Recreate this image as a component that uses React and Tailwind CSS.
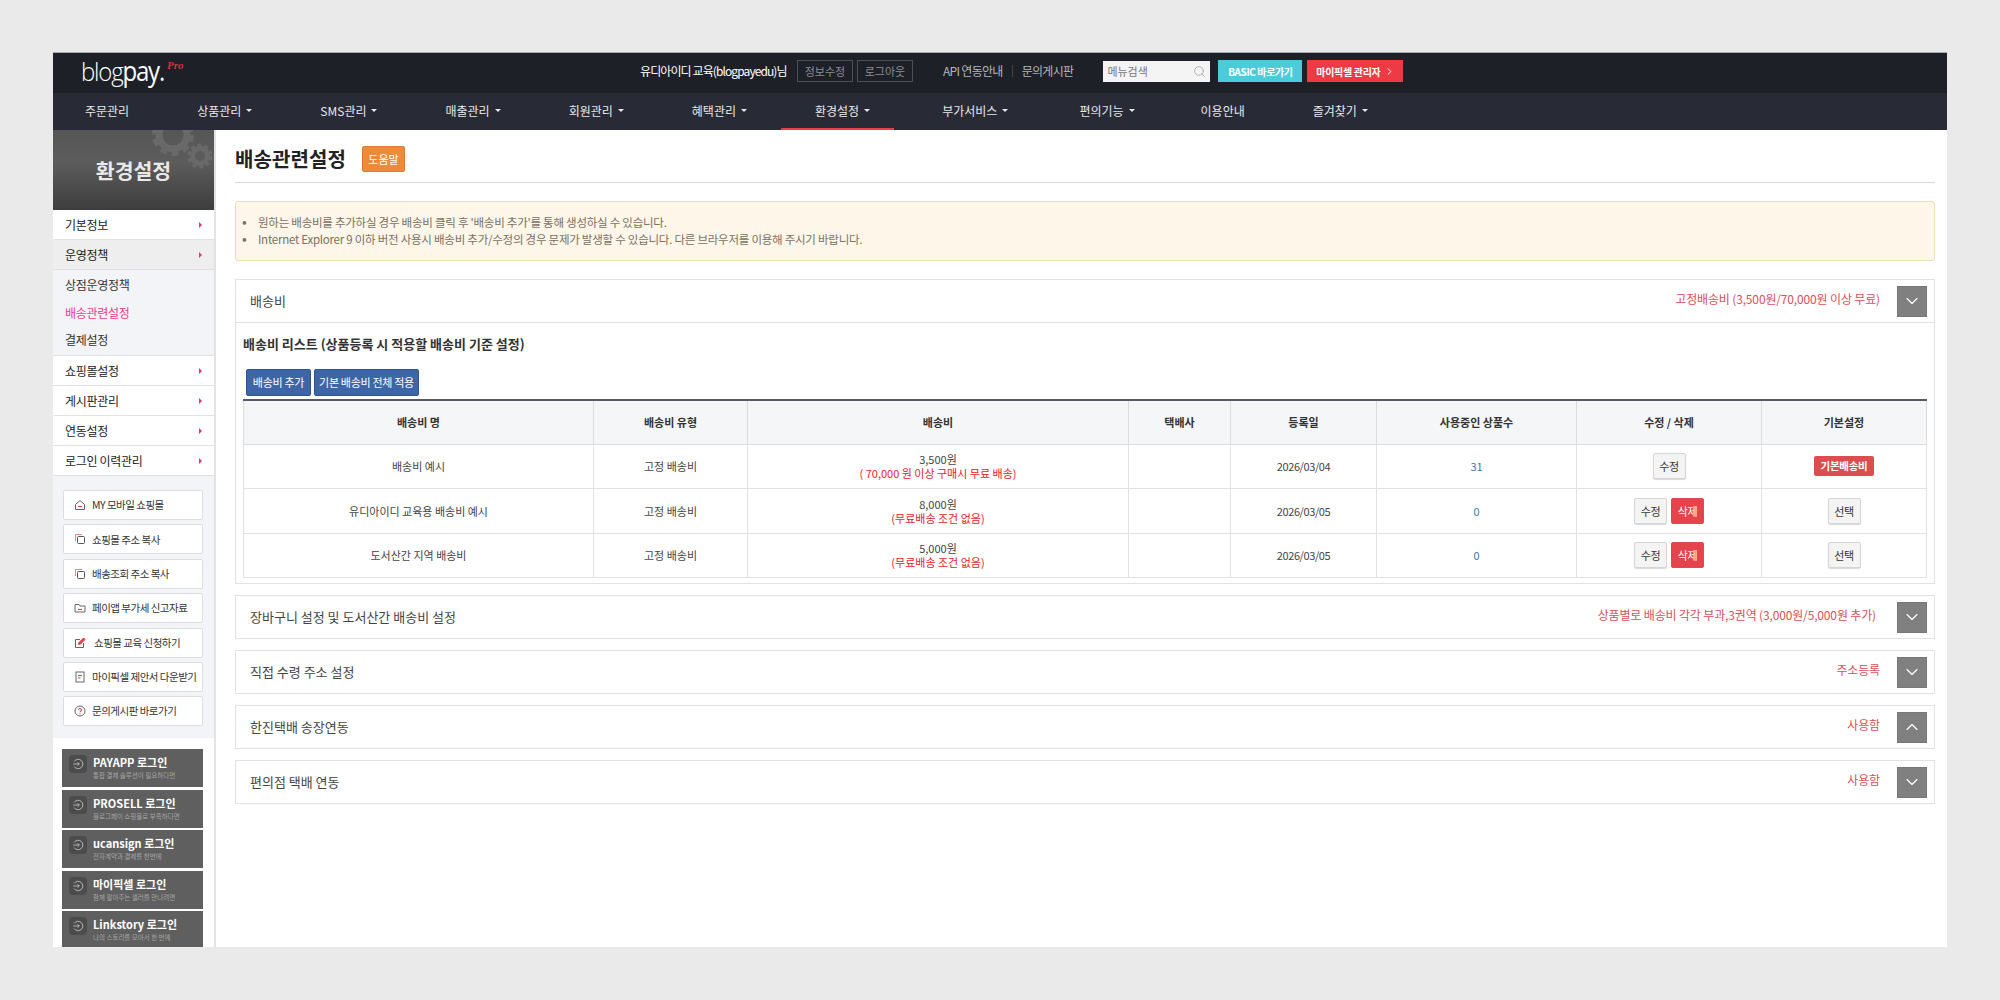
import React from "react";
import { ChevronDown, ChevronUp, ChevronRight, Search } from "lucide-react";

const FONT = "font-['Noto_Sans_CJK_KR','Noto_Sans',sans-serif]";

const NAV = [
  { label: "주문관리" },
  { label: "상품관리", caret: true },
  { label: "SMS관리", caret: true },
  { label: "매출관리", caret: true },
  { label: "회원관리", caret: true },
  { label: "혜택관리", caret: true },
  { label: "환경설정", caret: true, active: true },
  { label: "부가서비스", caret: true, wide: true },
  { label: "편의기능", caret: true, tight: true },
  { label: "이용안내" },
  { label: "즐겨찾기", caret: true },
];

function HomeIcon() {
  return (
    <svg width="12" height="12" viewBox="0 0 12 12" fill="none" stroke="#666" strokeWidth="1">
      <path d="M1.5 5.5 6 1.5l4.5 4v5h-9z" />
      <path d="M4 7.5h4" stroke="#d2404a" />
    </svg>
  );
}

function CopyIcon() {
  return (
    <svg width="12" height="12" viewBox="0 0 12 12" fill="none" strokeWidth="1">
      <path d="M1.5 8V1.5H8" stroke="#e08a90" />
      <rect x="3.5" y="3.5" width="7" height="7" rx="1" stroke="#555" />
    </svg>
  );
}

function FolderIcon() {
  return (
    <svg width="12" height="12" viewBox="0 0 12 12" fill="none" stroke="#666" strokeWidth="1">
      <path d="M1 2.5h4l1 1.5h5v6H1z" />
      <path d="M4 7.5h4" stroke="#d2404a" />
    </svg>
  );
}

function PenIcon() {
  return (
    <svg width="12" height="12" viewBox="0 0 12 12" fill="none" strokeWidth="1">
      <path d="M6 2.5H1.5v8h8V6" stroke="#666" />
      <path d="M4.5 7.5l.5-2 4.5-4.5 1.5 1.5L6.500 7z" fill="#e0404c" stroke="#e0404c" />
    </svg>
  );
}

function DocIcon() {
  return (
    <svg width="12" height="12" viewBox="0 0 12 12" fill="none" strokeWidth="1">
      <rect x="2" y="1" width="8" height="10" stroke="#666" />
      <path d="M4 4.500h4M4 7h2.500" stroke="#d2404a" />
    </svg>
  );
}

function HelpIcon() {
  return (
    <svg width="12" height="12" viewBox="0 0 12 12" fill="none" strokeWidth="1">
      <circle cx="6" cy="6" r="5" stroke="#666" />
      <path d="M4.500 4.800A1.500 1.500 0 1 1 6 6.500v.8M6 8.300v1" stroke="#c0303a" />
    </svg>
  );
}

const SIDE_LINKS = [
  { label: "MY 모바일 쇼핑몰", icon: HomeIcon },
  { label: "쇼핑몰 주소 복사", icon: CopyIcon },
  { label: "배송조회 주소 복사", icon: CopyIcon },
  { label: "페이앱 부가세 신고자료", icon: FolderIcon },
  { label: "쇼핑몰 교육 신청하기", icon: PenIcon, wide: true },
  { label: "마이픽셀 제안서 다운받기", icon: DocIcon },
  { label: "문의게시판 바로가기", icon: HelpIcon },
];

const LOGINS = [
  { title: "PAYAPP 로그인", sub: "통합 결제 솔루션이 필요하다면" },
  { title: "PROSELL 로그인", sub: "블로그페이 쇼핑몰로 부족하다면" },
  { title: "ucansign 로그인", sub: "전자계약과 결제를 한번에" },
  { title: "마이픽셀 로그인", sub: "함께 팔아주는 셀러를 만나려면" },
  { title: "Linkstory 로그인", sub: "나의 스토리를 모아서 한 번에" },
];

const ROWS = [
  { name: "배송비 예시", price: "3,500원", note: "( 70,000 원 이상 구매시 무료 배송)", date: "2026/03/04", count: "31", del: false, isDefault: true },
  { name: "유디아이디 교육용 배송비 예시", price: "8,000원", note: "(무료배송 조건 없음)", date: "2026/03/05", count: "0", del: true },
  { name: "도서산간 지역 배송비", price: "5,000원", note: "(무료배송 조건 없음)", date: "2026/03/05", count: "0", del: true },
];

const PANELS = [
  { title: "장바구니 설정 및 도서산간 배송비 설정", note: "상품별로 배송비 각각 부과,3권역 (3,000원/5,000원 추가)", far: true },
  { title: "직접 수령 주소 설정", note: "주소등록" },
  { title: "한진택배 송장연동", note: "사용함", open: true },
  { title: "편의점 택배 연동", note: "사용함" },
];

function Caret() {
  return <span className="ml-[5px] inline-block border-x-[3px] border-t-[3px] border-x-transparent border-t-current align-middle" />;
}

function ToggleBtn({ open }) {
  const Icon = open ? ChevronUp : ChevronDown;
  return (
    <span className="flex h-[31px] w-[30px] items-center justify-center border border-[#777] bg-[#808080] text-white">
      <Icon size={20} strokeWidth={1.4} />
    </span>
  );
}

function Header() {
  return (
    <div className="flex h-[41px] shrink-0 items-center border-t border-[#aaa] bg-[#1e2027] pb-[4px] text-[12px] text-white">
      <div className="ml-[28px] flex w-[559px] items-baseline font-['Open_Sans',sans-serif] text-[24px] leading-none">
        <span className="scale-y-110 font-light tracking-[-1.2px]">blog</span>
        <span className="scale-y-110 font-normal tracking-[-1.2px]">pay.</span>
        <span className="ml-[3px] -translate-y-[11px] font-['Liberation_Serif',serif] text-[11px] font-bold italic text-[#d0343c]">Pro</span>
      </div>
      <span className="w-[157px] tracking-[-0.9px] whitespace-nowrap">유디아이디 교육(blogpayedu)님</span>
      <span className="flex h-[22px] w-[56px] items-center justify-center border border-[#4d4f55] text-[11px] text-[#8d8f95]">정보수정</span>
      <span className="ml-[4px] flex h-[22px] w-[56px] items-center justify-center border border-[#4d4f55] text-[11px] text-[#8d8f95]">로그아웃</span>
      <span className="ml-[30px] text-[#b5b6ba] tracking-[-0.7px] whitespace-nowrap">API 연동안내</span>
      <span className="mx-[9px] h-[12px] w-px bg-[#444]" />
      <span className="text-[#b5b6ba] tracking-[-0.7px] whitespace-nowrap">문의게시판</span>
      <div className="ml-[30px] flex h-[21px] w-[107px] items-center justify-between bg-[#f4f4f4] pl-[4px] pr-[4px] text-[11px] text-[#777]">
        <span>메뉴검색</span>
        <Search size={13} strokeWidth={1.3} className="text-[#999]" />
      </div>
      <span className="ml-[8px] flex h-[22px] w-[84px] items-center justify-center bg-[#4ccbdb] text-[10px] font-bold tracking-[-0.4px] whitespace-nowrap">BASIC 바로가기</span>
      <span className="ml-[5px] flex h-[22px] w-[96px] items-center justify-center bg-[#ee3a45] text-[10px] font-bold tracking-[-0.3px] whitespace-nowrap">
        마이픽셀 관리자
        <ChevronRight size={11} className="ml-[3px]" />
      </span>
    </div>
  );
}

function navMargin(n) {
  if (n.active) return "mr-[14px]";
  if (n.wide) return "mr-[15px]";
  if (n.tight) return "mr-[10px]";
  return "mr-[12px]";
}

function Nav() {
  return (
    <div className="flex h-[37px] shrink-0 bg-[#282b35] text-[12px] text-[#e8e8ea]">
      {NAV.map((n, i) => (
        <div
          key={n.label}
          className={`flex items-center whitespace-nowrap border-b-[2px] pl-[34px] ${n.active ? "border-[#e5404d] pr-[24px]" : "border-transparent pr-[22px]"} ${navMargin(n)} ${i === 0 ? "ml-[-2px]" : ""}`}
        >
          {n.label}
          {n.caret && <Caret />}
        </div>
      ))}
    </div>
  );
}

function SideRow({ label, gray }) {
  return (
    <div
      className={`flex h-[30px] shrink-0 items-center justify-between border-b border-[#dfe1e4] px-[12px] text-[12px] tracking-[-0.3px] text-[#222] ${gray ? "bg-[#eeeeee]" : "bg-white"}`}
    >
      <span>{label}</span>
      <span className="border-y-[3px] border-l-[3px] border-y-transparent border-l-[#e8337c]" />
    </div>
  );
}

function Gears() {
  return (
    <svg className="absolute right-0 top-0" width="66" height="46" viewBox="0 0 66 46" fill="none" stroke="#696969">
      <circle cx="25" cy="5" r="14" strokeWidth="7" />
      <circle cx="25" cy="5" r="19" strokeWidth="4" strokeDasharray="7 5" />
      <circle cx="52" cy="26" r="7.500" strokeWidth="5" />
      <circle cx="52" cy="26" r="11" strokeWidth="3" strokeDasharray="4 3" />
    </svg>
  );
}

function Sidebar() {
  return (
    <aside className="flex w-[163px] shrink-0 flex-col overflow-hidden border-r-2 border-[#e2e3e5] bg-[#f2f4f7]">
      <div className="relative flex h-[80px] shrink-0 items-center justify-center overflow-hidden bg-[linear-gradient(#565656,#5c5c5c_40%,#3d3d3d)] text-[20.5px] font-bold text-[#e9e9e9]">
        <Gears />
        <span className="relative">환경설정</span>
      </div>
      <SideRow label="기본정보" />
      <SideRow label="운영정책" gray />
      <div className="flex h-[86px] shrink-0 flex-col border-b border-[#dfe1e4] py-[1px] pl-[12px] text-[12px] tracking-[-0.3px] text-[#333]">
        <span className="flex h-[28px] items-center">상점운영정책</span>
        <span className="flex h-[28px] items-center text-[#ef3b8b]">배송관련설정</span>
        <span className="flex h-[28px] items-center">결제설정</span>
      </div>
      <SideRow label="쇼핑몰설정" />
      <SideRow label="게시판관리" />
      <SideRow label="연동설정" />
      <SideRow label="로그인 이력관리" />

      <div className="flex shrink-0 flex-col gap-[4.4px] pb-[12px] pl-[10px] pr-[11px] pt-[14px]">
        {SIDE_LINKS.map((l) => (
          <div key={l.label} className="flex h-[30px] items-center rounded-[2px] border border-[#dcdee1] bg-white pl-[10px] text-[10.5px] tracking-[-0.5px] text-[#333] whitespace-nowrap">
            <span className={`shrink-0 ${l.wide ? "mr-[8px]" : "mr-[6px]"}`}>
              <l.icon />
            </span>
            {l.label}
          </div>
        ))}
      </div>

      <div className="flex flex-1 flex-col gap-[2.5px] bg-white pl-[9px] pr-[11px] pt-[11px]">
        {LOGINS.map((l) => (
          <div key={l.title} className="flex h-[38px] shrink-0 items-start bg-[#5f5f60] pl-[7px] pt-[6px]">
            <span className="mr-[6px] flex h-[18px] w-[18px] shrink-0 items-center justify-center rounded-[4px] bg-[#4c4c4d] text-[#bbb]">
              <svg width="12" height="12" viewBox="0 0 14 14" fill="none" stroke="currentColor" strokeWidth="1.1">
                <path d="M2.500 4a5.500 5.500 0 1 1 0 6" />
                <path d="M1.500 7h7M6.500 5l2 2-2 2" />
              </svg>
            </span>
            <div className="flex min-w-0 flex-col whitespace-nowrap">
              <span className="text-[11px] font-bold leading-[15px] text-white">{l.title}</span>
              <span className="text-[6.5px] leading-[10px] text-[#a5a5a5]">{l.sub}</span>
            </div>
          </div>
        ))}
      </div>
    </aside>
  );
}

function SmallBtn({ children, tone = "plain" }) {
  const tones = {
    plain: "border-[#d5d5d5] bg-[#f4f4f4] text-[#333] shadow-[0_1px_1px_rgba(0,0,0,.15)]",
    red: "border-[#e04b52] bg-[#e5444c] text-white",
  };
  return <span className={`inline-flex h-[26px] w-[33px] items-center justify-center rounded-[2px] border text-[11px] tracking-[-0.4px] ${tones[tone]}`}>{children}</span>;
}

function FeeTable() {
  const th = "border border-[#dcdcdc] border-t-0 bg-[#f5f6f8] text-[11px] font-semibold text-[#333]";
  const td = "border border-[#e2e2e2] text-center text-[11px]";
  return (
    <table className="w-[1683px] table-fixed border-collapse border-t-2 border-[#565a66] text-[#444]">
      <colgroup>
        <col className="w-[350px]" />
        <col className="w-[154px]" />
        <col className="w-[381px]" />
        <col className="w-[102px]" />
        <col className="w-[146px]" />
        <col className="w-[200px]" />
        <col className="w-[185px]" />
        <col className="w-[165px]" />
      </colgroup>
      <thead>
        <tr className="h-[44px]">
          {["배송비 명", "배송비 유형", "배송비", "택배사", "등록일", "사용중인 상품수", "수정 / 삭제", "기본설정"].map((h) => (
            <th key={h} className={th}>{h}</th>
          ))}
        </tr>
      </thead>
      <tbody>
        {ROWS.map((r) => (
          <tr key={r.name} className="h-[44.5px]">
            <td className={td}>{r.name}</td>
            <td className={td}>고정 배송비</td>
            <td className={`${td} leading-[14px]`}>
              {r.price}
              <br />
              <span className="text-[#e4202c]">{r.note}</span>
            </td>
            <td className={td} />
            <td className={`${td} tracking-[-0.4px]`}>{r.date}</td>
            <td className={td}>
              <span className="text-[#3a78b0]">{r.count}</span>
            </td>
            <td className={td}>
              <span className="flex items-center justify-center gap-[4px]">
                <SmallBtn>수정</SmallBtn>
                {r.del && <SmallBtn tone="red">삭제</SmallBtn>}
              </span>
            </td>
            <td className={td}>
              <span className="flex items-center justify-center">
                {r.isDefault ? (
                  <span className="flex h-[20px] w-[60px] items-center justify-center rounded-[2px] bg-[#dc4d50] text-[10.5px] font-semibold tracking-[-0.3px] text-white">기본배송비</span>
                ) : (
                  <SmallBtn>선택</SmallBtn>
                )}
              </span>
            </td>
          </tr>
        ))}
      </tbody>
    </table>
  );
}

function PanelHead({ title, note, open, far, height }) {
  return (
    <div className={`flex items-center justify-between pl-[14px] pr-[7px] ${height}`}>
      <span className="text-[13px] text-[#444]">{title}</span>
      <span className="flex items-center">
        <span className={`-translate-y-[2px] text-[12px] tracking-[-0.15px] text-[#d9505c] ${far ? "mr-[21px]" : "mr-[17px]"}`}>{note}</span>
        <ToggleBtn open={open} />
      </span>
    </div>
  );
}

function Main() {
  return (
    <main className="flex min-w-0 flex-1 flex-col bg-white pl-[19px] pr-[12px]">
      <div className="flex h-[53px] shrink-0 items-center gap-[16px] border-b border-[#d8d8d8] pt-[6px]">
        <h1 className="text-[20px] font-semibold tracking-[0.1px] text-[#222]">배송관련설정</h1>
        <span className="flex h-[26px] w-[43px] items-center justify-center rounded-[2px] border border-[#dd7a30] bg-[#ee8a3c] text-[11px] text-white">도움말</span>
      </div>

      <div className="mt-[18px] flex h-[60px] shrink-0 flex-col justify-center rounded-[3px] border border-[#efdcb8] bg-[#fdf6e9] pl-[6px] text-[11.5px] leading-[17px] tracking-[-0.25px] text-[#7a7163]">
        <p className="before:inline-block before:w-[16px] before:text-[14px] before:leading-none before:content-['•']">원하는 배송비를 추가하실 경우 배송비 클릭 후 '배송비 추가'를 통해 생성하실 수 있습니다.</p>
        <p className="before:inline-block before:w-[16px] before:text-[14px] before:leading-none before:content-['•']">Internet Explorer 9 이하 버전 사용시 배송비 추가/수정의 경우 문제가 발생할 수 있습니다. 다른 브라우저를 이용해 주시기 바랍니다.</p>
      </div>

      <section className="mt-[18px] h-[305px] shrink-0 border border-[#e2e2e2]">
        <div className="border-b border-[#e2e2e2]">
          <PanelHead title="배송비" note="고정배송비 (3,500원/70,000원 이상 무료)" height="h-[42px]" />
        </div>
        <div className="px-[7px]">
          <h2 className="mt-[12px] text-[13px] font-semibold leading-[18px] text-[#333]">배송비 리스트 (상품등록 시 적용할 배송비 기준 설정)</h2>
          <div className="mb-[3px] ml-[3px] mt-[16px] flex gap-[3px]">
            <span className="flex h-[27px] w-[65px] items-center justify-center rounded-[2px] border border-[#2f5590] bg-[#3e66a6] text-[11px] tracking-[-0.3px] text-white">배송비 추가</span>
            <span className="flex h-[27px] w-[105px] items-center justify-center rounded-[2px] border border-[#2f5590] bg-[#3e66a6] text-[11px] tracking-[-0.3px] text-white">기본 배송비 전체 적용</span>
          </div>
          <FeeTable />
        </div>
      </section>

      {PANELS.map((p) => (
        <section key={p.title} className="mt-[11px] shrink-0 border border-[#e2e2e2]">
          <PanelHead title={p.title} note={p.note} open={p.open} far={p.far} height="h-[42px]" />
        </section>
      ))}
    </main>
  );
}

export default function App() {
  return (
    <div className={`h-[1000px] overflow-hidden bg-[#eaeaea] px-[53px] pt-[52px] ${FONT}`}>
      <div className="flex h-[895px] flex-col overflow-hidden">
        <Header />
        <Nav />
        <div className="flex min-h-0 flex-1">
          <Sidebar />
          <Main />
        </div>
      </div>
    </div>
  );
}
